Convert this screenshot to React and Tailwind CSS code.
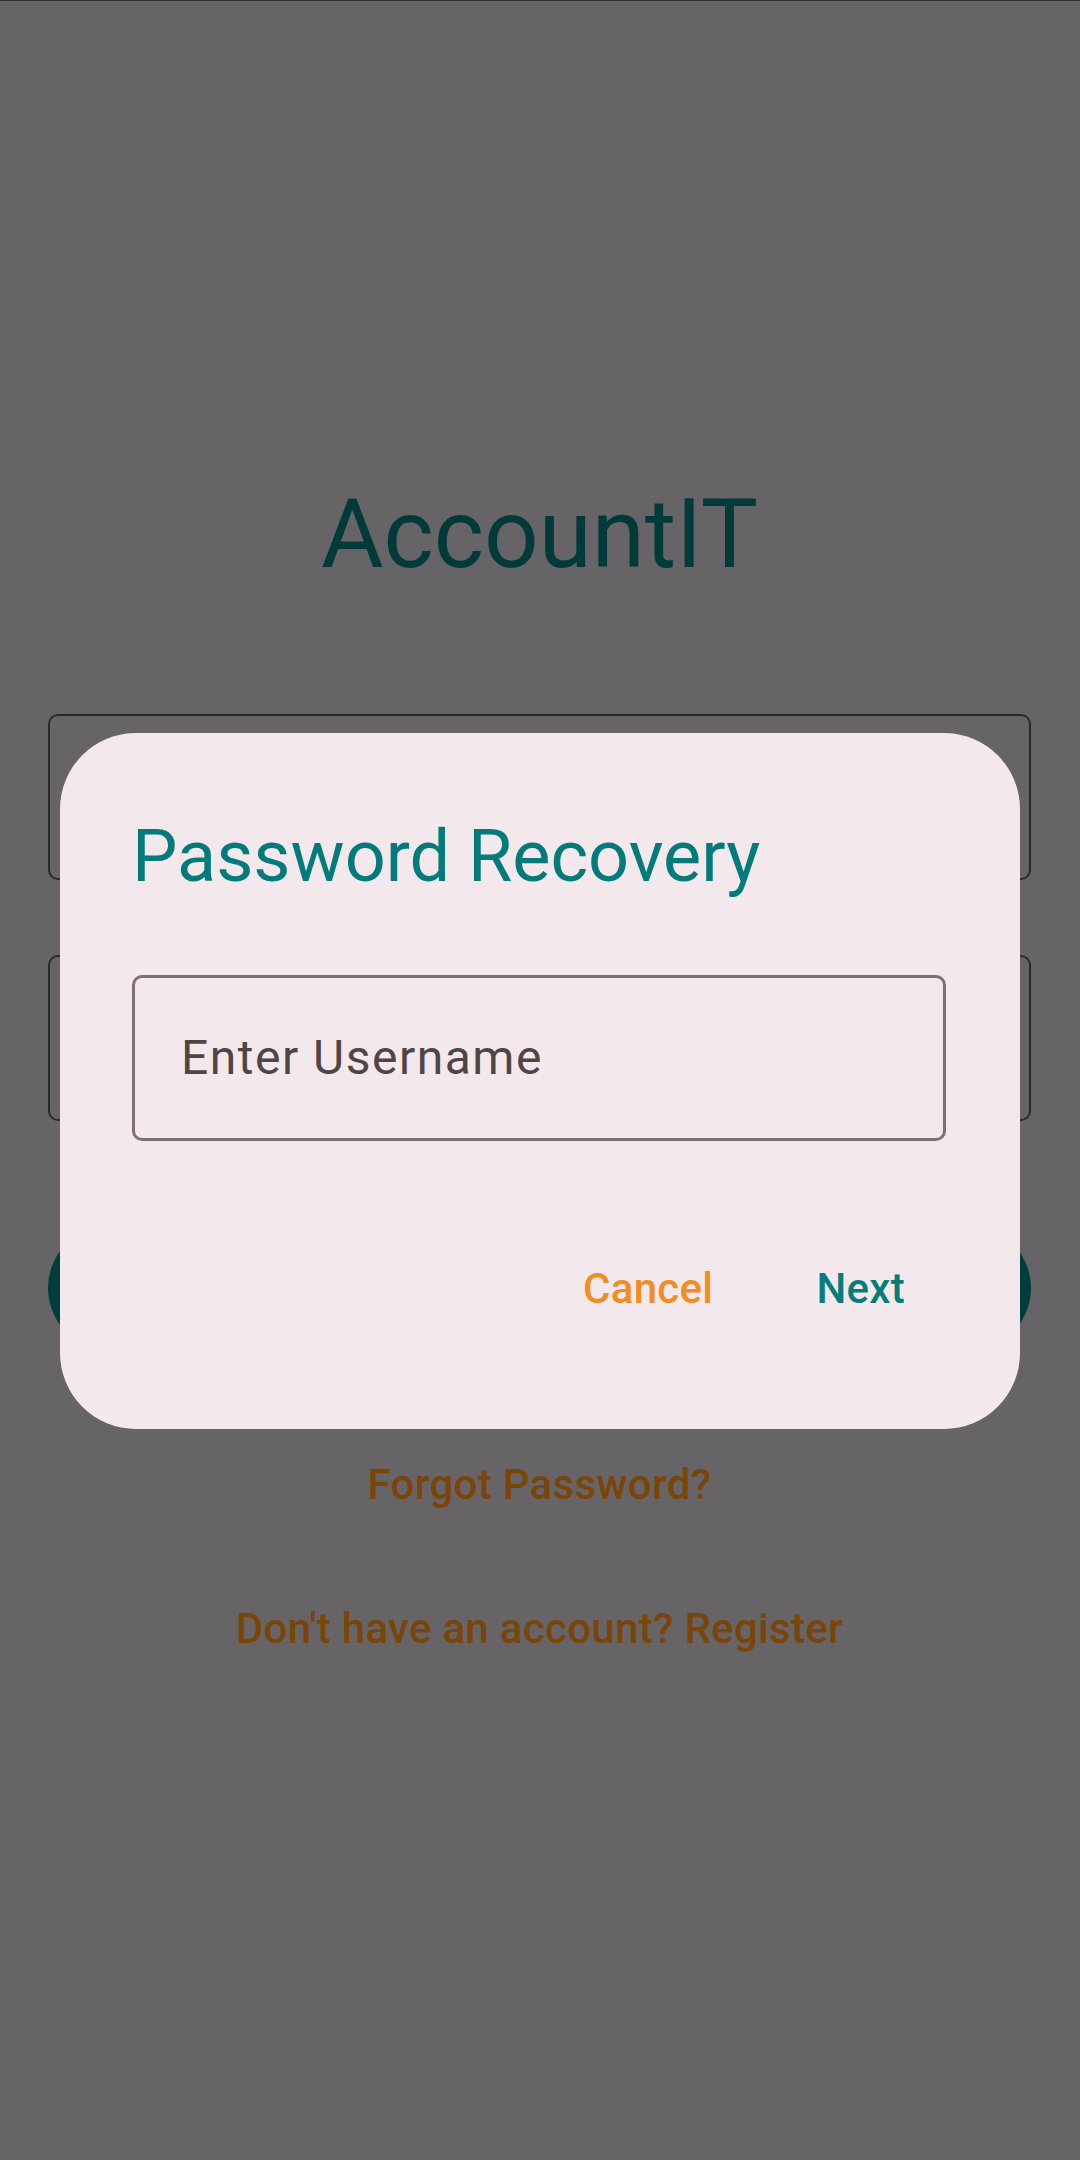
import React from "react";

export default function App() {
  return (
    <div
      className="relative w-[1080px] h-[2160px] overflow-hidden bg-[#676468]"
      style={{ fontFamily: "Roboto, 'Liberation Sans', sans-serif" }}
    >
      <div className="h-px bg-[#372c2e]" />
      {/* background login screen (dimmed) */}
      <div className="flex flex-col pl-[48px] pr-[49px]">
        <div className="mt-[485px] h-[96px] text-center text-[96px] leading-[96px] text-[#013a3a]">
          AccountIT
        </div>
        <div className="mt-[132px] h-[166px] rounded-[10px] border-2 border-[#2d292b]" />
        <div className="mt-[75px] h-[166px] rounded-[10px] border-2 border-[#2d292b]" />
        <div className="mt-[104px] h-[126px] rounded-full bg-[#023c3c]" />
        <div className="mt-[109px] h-[50px] text-center text-[42px] leading-[50px] tracking-[0.3px] font-medium text-[#7a4507]">
          Forgot Password?
        </div>
        <div className="mt-[94px] h-[50px] text-center text-[42px] leading-[50px] tracking-[0.3px] font-medium text-[#7a4507]">
          Don't have an account? Register
        </div>
      </div>

      {/* dialog */}
      <div className="absolute left-[60px] top-[733px] w-[960px] h-[696px] rounded-[76px] bg-[#f3e9ed] flex flex-col pl-[72px] pr-[74px] pt-[88px]">
        <div className="h-[72px] text-[72px] leading-[72px] text-[#047b7b]">
          Password Recovery
        </div>
        <div className="mt-[82px] h-[166px] rounded-[10px] border-[3px] border-[#7f7172] flex items-center pl-[46px]">
          <span className="text-[48px] leading-[48px] tracking-[1.5px] text-[#4f4446]">Enter Username</span>
        </div>
        <div className="mt-[127px] flex justify-end items-center gap-[103px] pr-[41px]">
          <span className="text-[42px] leading-[42px] tracking-[0.3px] font-medium text-[#f28d1f]">Cancel</span>
          <span className="text-[42px] leading-[42px] tracking-[0.3px] font-medium text-[#077d7b]">Next</span>
        </div>
      </div>
    </div>
  );
}
